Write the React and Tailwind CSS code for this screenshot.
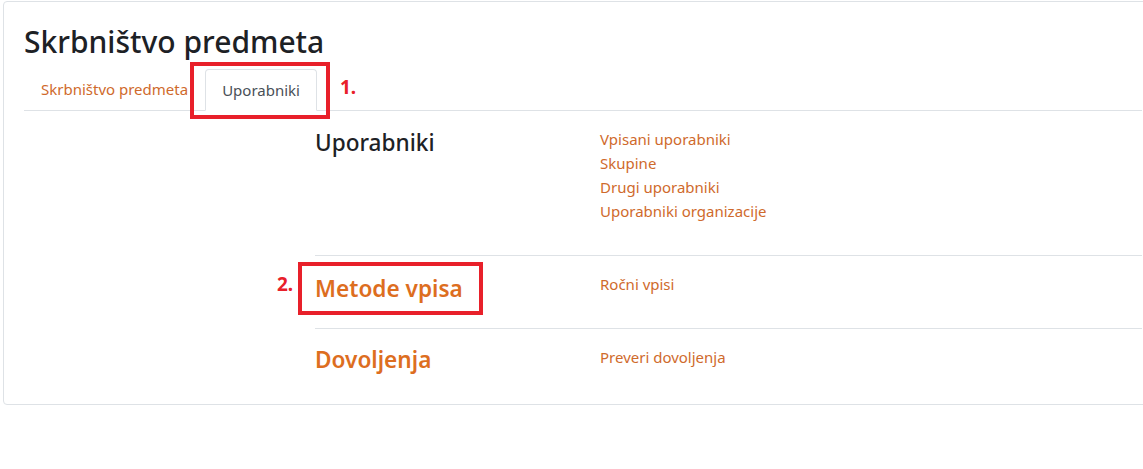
export default function App() {
  const font = { fontFamily: '"Noto Sans", "Open Sans", sans-serif' };
  const link = "text-[#cf6a2c] text-[15px] leading-[24px]";
  return (
    <div className="w-[1143px] h-[469px] bg-white overflow-hidden relative" style={font}>
      <div className="ml-[3px] mt-[1px] w-[1160px] h-[404px] border border-[#dee2e6] rounded-[4px] bg-white px-[20px] pt-[22px]">
        <h2 className="text-[30px] leading-[36px] font-medium text-[#1d2125]">Skrbništvo predmeta</h2>
        <div className="mt-[9px] flex items-end border-b border-[#dee2e6] h-[42px]">
          <div className="px-[16px] h-[41px] flex items-center text-[15px] text-[#cf6a2c] border border-transparent">Skrbništvo predmeta</div>
          <div className="px-[16px] h-[42px] -mb-px flex items-center text-[15px] text-[#495057] bg-white border border-[#dee2e6] border-b-white rounded-t-[4px]">Uporabniki</div>
        </div>
        <div className="ml-[291px]">
          <div className="flex pt-[16px] pb-[32px] border-b border-[#dee2e6]">
            <div className="w-[285px] pt-[1px] text-[22.6px] leading-[30px] font-medium text-[#1d2125]">Uporabniki</div>
            <div className="flex flex-col">
              <span className={link}>Vpisani uporabniki</span>
              <span className={link}>Skupine</span>
              <span className={link}>Drugi uporabniki</span>
              <span className={link}>Uporabniki organizacije</span>
            </div>
          </div>
          <div className="flex pt-[16px] pb-[22px] border-b border-[#dee2e6]">
            <div className="w-[285px] text-[22.6px] leading-[34px] font-semibold text-[#dd6e1f]">Metode vpisa</div>
            <div className="flex flex-col">
              <span className={link}>Ročni vpisi</span>
            </div>
          </div>
          <div className="flex pt-[16px]">
            <div className="w-[285px] text-[22.6px] leading-[30px] font-semibold text-[#dd6e1f]">Dovoljenja</div>
            <div className="flex flex-col">
              <span className={link}>Preveri dovoljenja</span>
            </div>
          </div>
        </div>
      </div>
      <div className="absolute left-[190px] top-[62px] w-[140px] h-[57px] border-[4px] border-[#e8202a]" />
      <div className="absolute left-[340px] top-[73px] text-[19px] font-bold text-[#e8202a]">1.</div>
      <div className="absolute left-[298px] top-[262px] w-[185px] h-[53px] border-[4px] border-[#e8202a]" />
      <div className="absolute left-[277px] top-[270px] text-[19px] font-bold text-[#e8202a]">2.</div>
    </div>
  );
}
